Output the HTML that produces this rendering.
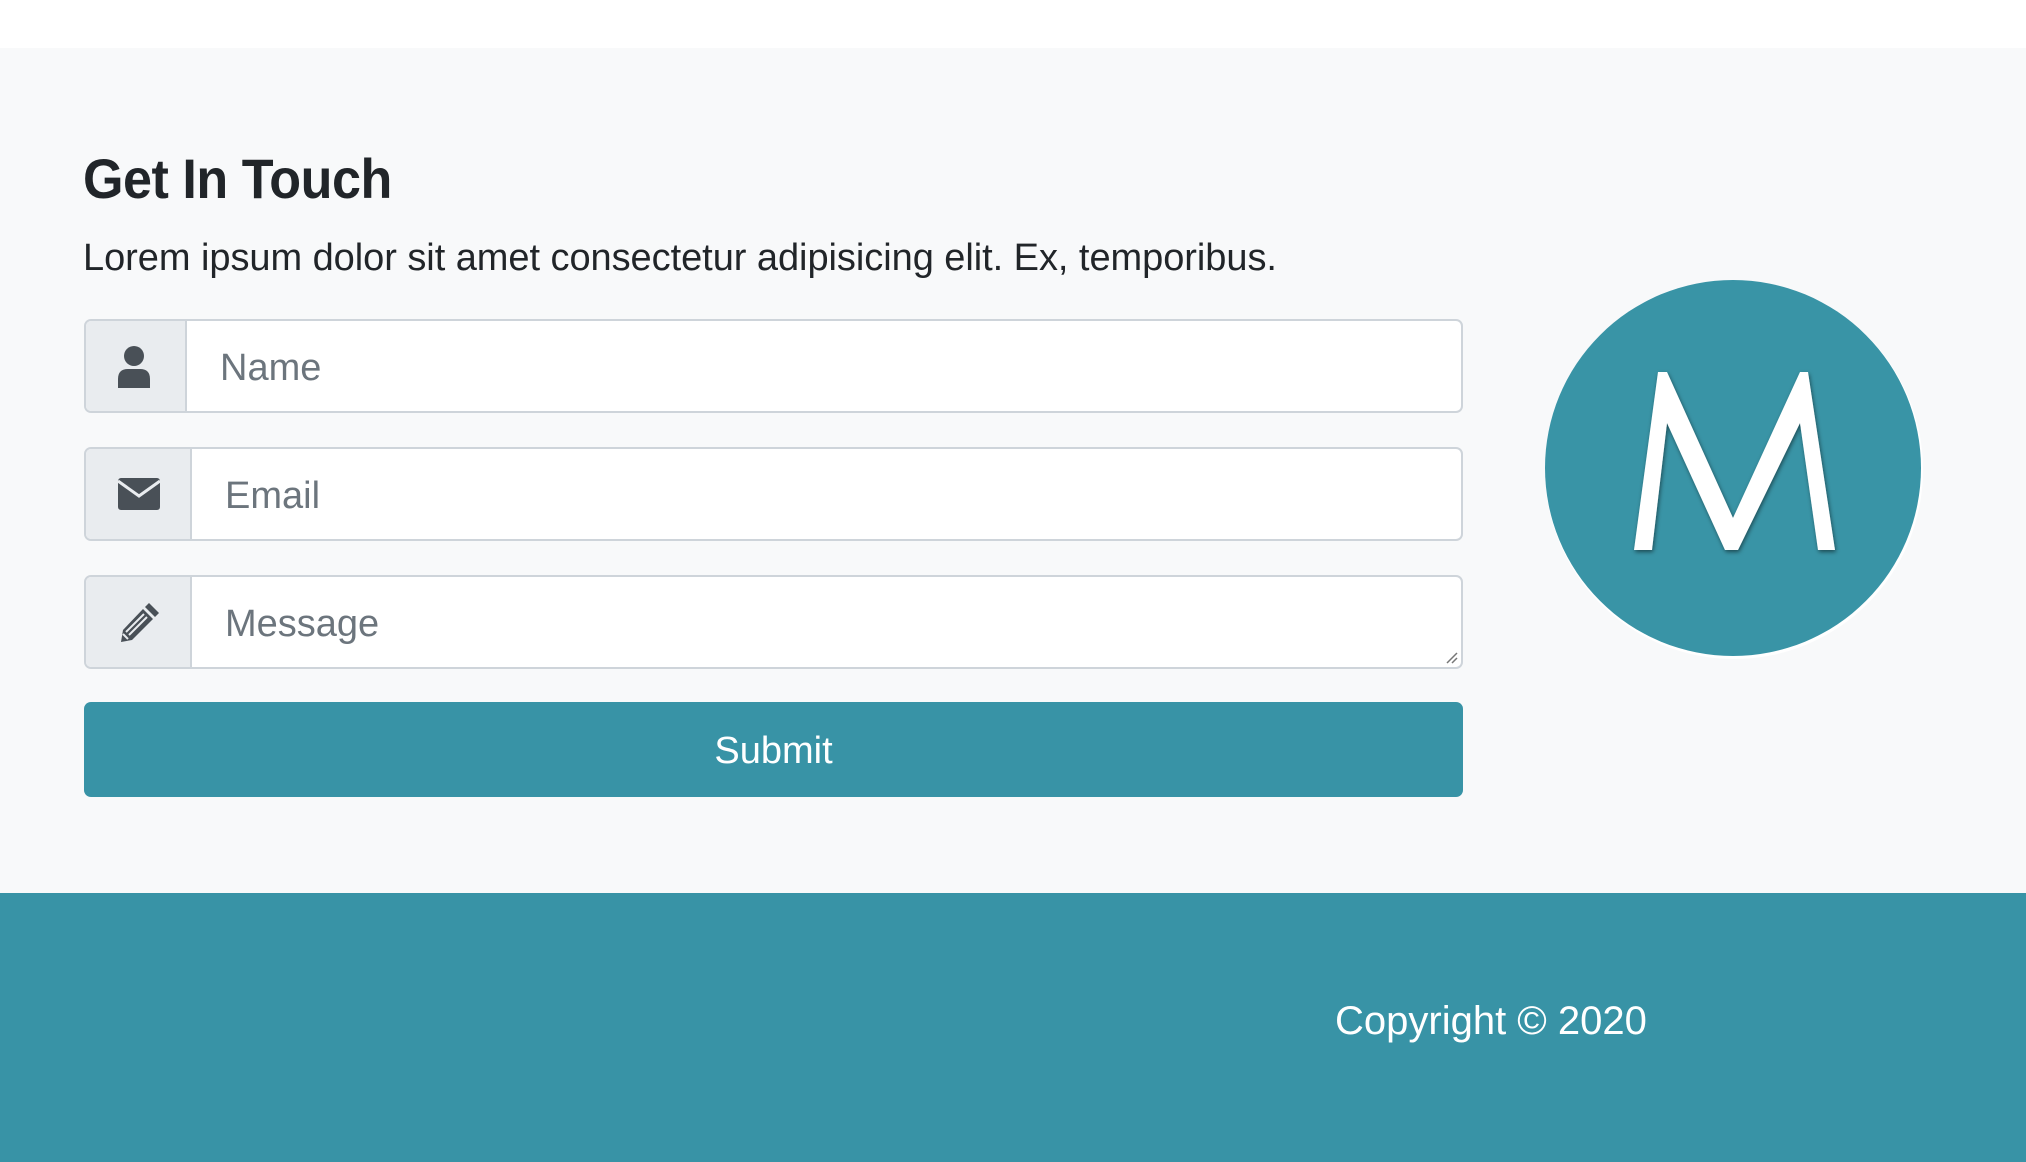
<!DOCTYPE html>
<html><head><meta charset="utf-8"><style>
*{margin:0;padding:0;box-sizing:border-box}
body{width:2026px;height:1162px;position:relative;background:#fff;font-family:"Liberation Sans",Arial,sans-serif;overflow:hidden}
.sec{position:absolute;left:0;top:48px;width:2026px;height:845px;background:#f8f9fa}
.foot{position:absolute;left:0;top:893px;width:2026px;height:269px;background:#3893a6}
h2{position:absolute;left:83px;top:146px;font-size:56px;font-weight:700;color:#212529;transform:scaleX(0.93);transform-origin:left;white-space:nowrap;letter-spacing:-0.5px}
.lead{position:absolute;left:83px;top:237px;font-size:38px;color:#212529;white-space:nowrap;letter-spacing:-0.05px}
.grp{position:absolute;left:84px;width:1379px;height:94px;border:2px solid #ced4da;border-radius:7px;background:#fff;overflow:hidden}
.add{position:absolute;left:0;top:0;bottom:0;background:#e9ecef;border-right:2px solid #ced4da}
.ph{position:absolute;top:4px;bottom:0;display:flex;align-items:center;font-size:38px;color:#6c757d}
.add svg{position:absolute}
.btn{position:absolute;left:84px;top:702px;width:1379px;height:95px;background:#3893a6;border-radius:7px;color:#fff;font-size:38px;display:flex;align-items:center;justify-content:center;padding-top:4px}
.copy{position:absolute;left:1335px;top:999px;font-size:40px;color:#fff;white-space:nowrap}
</style></head><body>
<div class="sec"></div>
<h2>Get In Touch</h2>
<div class="lead">Lorem ipsum dolor sit amet consectetur adipisicing elit. Ex, temporibus.</div>

<div class="grp" style="top:319px">
 <div class="add" style="width:101px">
  <svg style="left:30px;top:25px" width="36" height="42" viewBox="0 0 36 42"><circle cx="18" cy="10" r="10" fill="#495057"/><path d="M2 42 V33 Q2 23 12 23 H24 Q34 23 34 33 V42 Z" fill="#495057"/></svg>
 </div>
 <div class="ph" style="left:134px">Name</div>
</div>

<div class="grp" style="top:447px">
 <div class="add" style="width:106px">
  <svg style="left:32px;top:29px" width="42" height="32" viewBox="0 0 42 32"><rect x="0" y="0" width="42" height="32" rx="3" fill="#495057"/><path d="M0 3 L21 18 L42 3" stroke="#e9ecef" stroke-width="3" fill="none"/></svg>
 </div>
 <div class="ph" style="left:139px">Email</div>
</div>

<div class="grp" style="top:575px">
 <div class="add" style="width:106px">
  <svg style="left:33px;top:24px" width="42" height="42" viewBox="0 0 42 42"><path d="M30 2 L40 12 L36 16 L26 6 Z" fill="#495057"/><path d="M24 8 L34 18 L13 39 L2 41 L4 29 Z" fill="#495057"/><path d="M7 31 L25 13 M10 34 L28 16" stroke="#e9ecef" stroke-width="2"/><path d="M4 33 L9 38" stroke="#e9ecef" stroke-width="2"/></svg>
 </div>
 <div class="ph" style="left:139px;top:0;align-items:flex-start;padding-top:26px">Message</div>
 <svg style="position:absolute;right:3px;bottom:3px" width="14" height="14"><path d="M13 3 L3 13 M13 8 L8 13" stroke="#777" stroke-width="1.5"/></svg>
</div>

<div class="btn">Submit</div>

<svg style="position:absolute;left:1543px;top:279px" width="382" height="382" viewBox="0 0 382 382">
 <defs><filter id="s" x="-20%" y="-20%" width="140%" height="140%"><feDropShadow dx="1" dy="2" stdDeviation="2" flood-color="#000" flood-opacity="0.5"/></filter></defs>
 <circle cx="191" cy="191" r="189" fill="#fff"/>
 <circle cx="190" cy="189" r="188" fill="#3994a6"/>
 <polygon points="91,271 115,93 124,93 190,239 257,93 265,93 292,271 275,271 257,144 195,271 182,271 124,144 109,271" fill="#fff" filter="url(#s)"/>
</svg>

<div class="foot"></div>
<div class="copy">Copyright © 2020</div>
</body></html>
